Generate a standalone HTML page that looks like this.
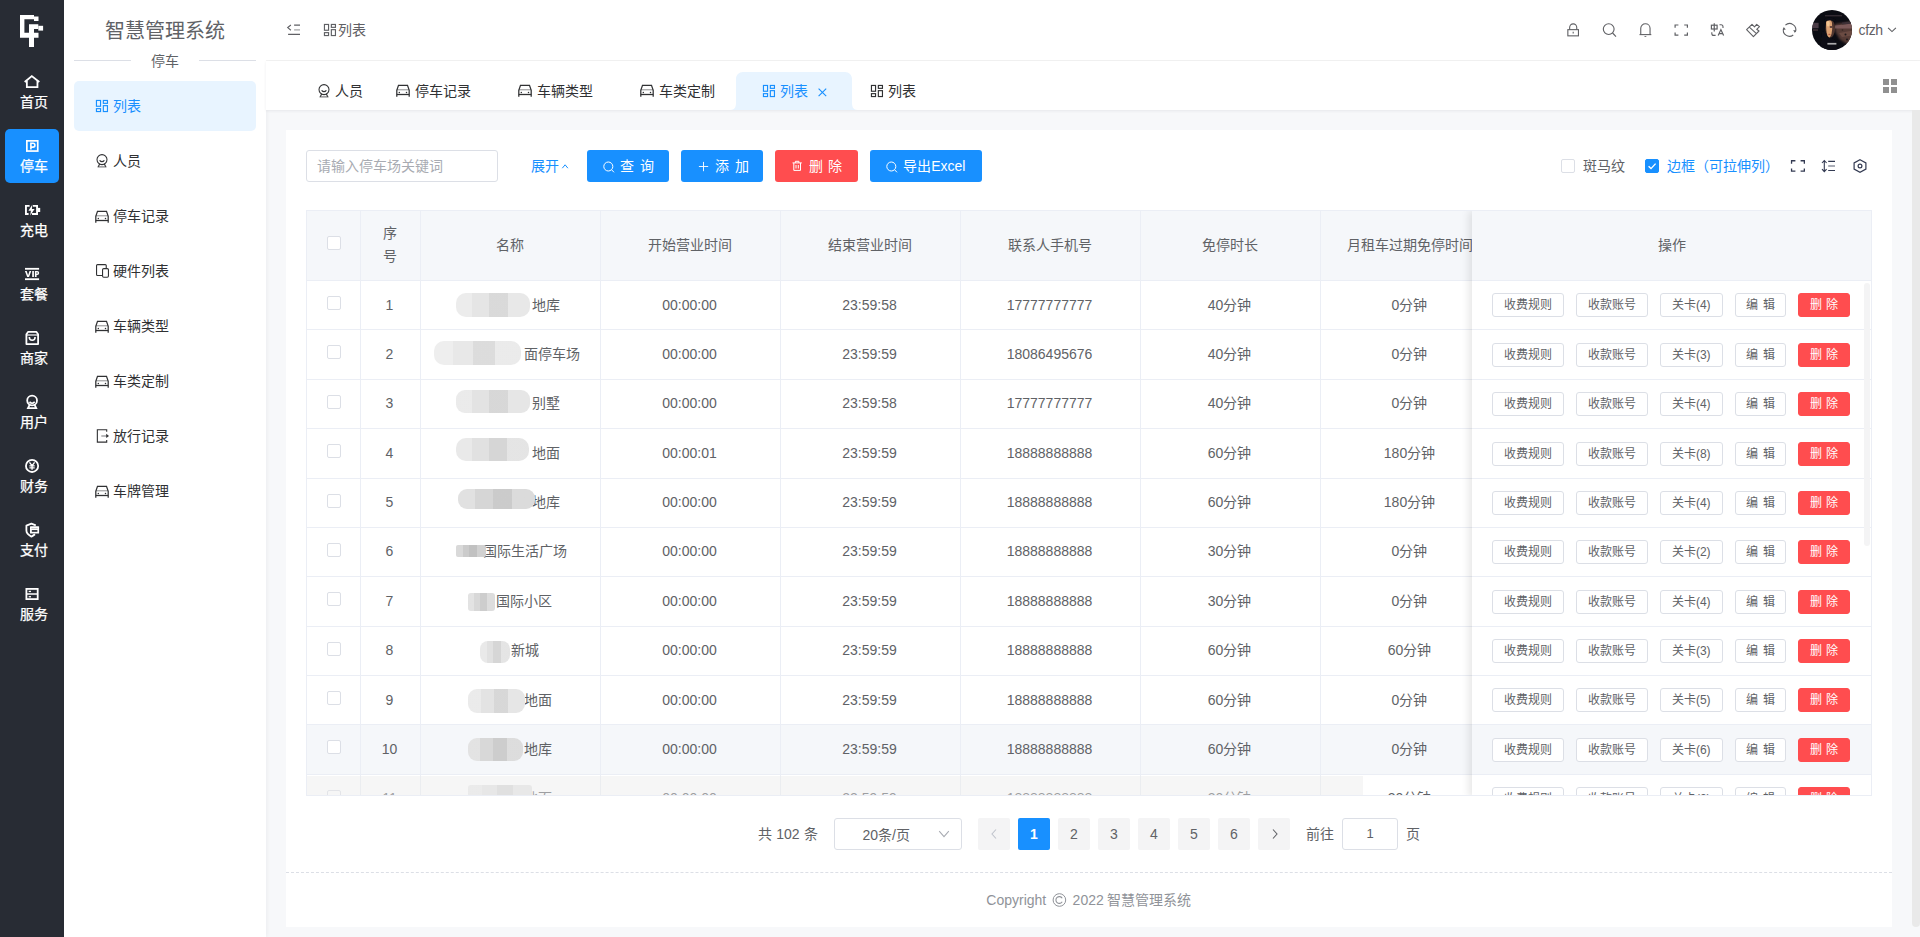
<!DOCTYPE html>
<html lang="zh-CN">
<head>
<meta charset="utf-8">
<title>智慧管理系统</title>
<style>
*{box-sizing:border-box;margin:0;padding:0}
html,body{width:1920px;height:937px;overflow:hidden;background:#f7f8fa;font-family:"Liberation Sans",sans-serif;font-size:14px;color:#606266}
.abs{position:absolute}
svg{display:block;overflow:visible}
.t{position:absolute;line-height:18px;white-space:nowrap}
#rail{position:absolute;left:0;top:0;width:64px;height:937px;background:#282c34}
#side{position:absolute;left:64px;top:0;width:202px;height:937px;background:#fff;box-shadow:1px 0 4px rgba(0,21,41,.05)}
#hdr{position:absolute;left:266px;top:0;width:1654px;height:61px;background:#fff;border-bottom:1px solid #f3f3f3}
#tabs{position:absolute;left:266px;top:61px;width:1654px;height:49px;background:#fff;box-shadow:0 1px 3px rgba(0,21,41,.07)}
#card{position:absolute;left:286px;top:130px;width:1606px;height:797px;background:#fff}
.btn{position:absolute;top:150px;height:32px;border-radius:3px;background:#1890ff}
.btn.red{background:#ff4d4f}
.cb{position:absolute;width:14px;height:14px;border:1px solid #dcdfe6;border-radius:2px;background:#fff}
#tbl{position:absolute;left:306px;top:210px;width:1566px;height:586px;overflow:hidden;border:1px solid #ebeef5;background:#fff}
.hd{position:absolute;left:0;top:0;width:1566px;height:70px;background:#f5f7fa;border-bottom:1px solid #ebeef5}
.vl{position:absolute;top:0;width:1px;height:586px;background:#ebeef5}
.row{position:absolute;left:0;width:1566px;border-bottom:1px solid #ebeef5}
.c{position:absolute;text-align:center;font-size:14px;line-height:18px;color:#606266;white-space:nowrap}
#fix{position:absolute;left:1165px;top:0;width:401px;height:586px;background:#fff;box-shadow:-3px 0 8px rgba(0,0,0,.10);overflow:hidden}
.sb{position:absolute;height:24px;border:1px solid #dcdfe6;border-radius:3px;background:#fff;color:#606266;font-size:12px;line-height:22px;text-align:center;white-space:nowrap;word-spacing:.8px}
.sb.red{background:#ff4d4f;border-color:#ff4d4f;color:#fff}
.blur{position:absolute;background-image:linear-gradient(90deg,rgba(255,255,255,.28) 0 22%,rgba(255,255,255,0) 22% 45%,rgba(0,0,0,.05) 45% 70%,rgba(255,255,255,.12) 70%)}
.pg{position:absolute;top:818px;width:32px;height:32px;border-radius:2px;background:#f4f4f5;color:#606266;font-size:14px;line-height:32px;text-align:center}
.pg.on{background:#1890ff;color:#fff;font-weight:700}
</style>
</head>
<body>
<div id="rail"></div>
<svg class="abs" style="left:0;top:0;width:64px;height:60px" viewBox="0 0 64 60" fill="#fff"><path d="M20 15h14v4.3H24.4v13.4H29v-8.5h9.3V29H34v3.7h4.5v5H34v9.2h-5v-9.2h-9z"/><rect x="34" y="16.5" width="4.5" height="4.5"/><rect x="38.3" y="25.8" width="4.8" height="4.8"/></svg>
<div class="abs" style="left:5px;top:129px;width:54px;height:54px;border-radius:5px;background:#1890ff"></div>
<svg class="abs" style="left:24px;top:74px;width:16px;height:15px;color:#fff" viewBox="0 0 16 15"><path d="M0.7 8 L7.8 2.1 L15.3 8" fill="none" stroke="currentColor" stroke-width="1.9" /><path d="M2.85 7 V13.2 H13.45 V7" fill="none" stroke="currentColor" stroke-width="1.8" /></svg><div class="t" style="left:0;width:67px;text-align:center;top:93px;font-size:14px;color:#fff;-webkit-text-stroke:.25px #fff">首页</div>
<svg class="abs" style="left:25px;top:139px;width:15px;height:14px;color:#fff" viewBox="0 0 15 14"><rect x="1.85" y="1.85" width="10.9" height="10.2" fill="none" stroke="currentColor" stroke-width="1.7"/><path d="M5.9 10.4 V4.3 H8 a1.9 1.9 0 0 1 0 3.8 H5.9" fill="none" stroke="currentColor" stroke-width="1.6" /></svg><div class="t" style="left:0;width:67px;text-align:center;top:157px;font-size:14px;color:#fff;-webkit-text-stroke:.25px #fff">停车</div>
<svg class="abs" style="left:24px;top:204px;width:17px;height:12px;color:#fff" viewBox="0 0 17 12"><path d="M5.6 1.85 H1.95 V10.05 H4.6 M9 1.85 H13.05 V10.05 H8" fill="none" stroke="currentColor" stroke-width="1.9" /><rect x="14" y="3.9" width="2.2" height="4.1" fill="currentColor"/><path d="M8.4 0.4 L4.4 6.7 H6.9 L6.2 11.6 L10.6 4.9 H7.9 Z" fill="currentColor" /></svg><div class="t" style="left:0;width:67px;text-align:center;top:221px;font-size:14px;color:#fff;-webkit-text-stroke:.25px #fff">充电</div>
<svg class="abs" style="left:24px;top:267px;width:16px;height:14px;color:#fff" viewBox="0 0 16 14"><rect x="1" y="0.9" width="14.1" height="1.8" fill="currentColor"/><rect x="1" y="11.3" width="14.1" height="1.8" fill="currentColor"/><path d="M0.9 4 H2.7 L4.1 8.3 L5.5 4 H7.3 L5 10 H3.2 Z M8.2 4 H9.9 V10 H8.2 Z M10.9 4 H13.2 a2 2 0 0 1 0 4 H12.6 V10 H10.9 Z M12.5 5.3 V6.7 H13 a.7 .7 0 0 0 0 -1.4 Z" fill="currentColor" fill-rule="evenodd"/></svg><div class="t" style="left:0;width:67px;text-align:center;top:285px;font-size:14px;color:#fff;-webkit-text-stroke:.25px #fff">套餐</div>
<svg class="abs" style="left:24px;top:330px;width:16px;height:16px;color:#fff" viewBox="0 0 16 16"><path d="M4.2 1.8 H12.3 L14.1 4.2 V14.1 H2.4 V4.2 Z" fill="none" stroke="currentColor" stroke-width="1.8" stroke-linejoin="round"/><path d="M2.4 5 H14.1" fill="none" stroke="currentColor" stroke-width="1.2" /><path d="M5.3 6.9 a2.9 3.3 0 0 0 5.8 0" fill="none" stroke="currentColor" stroke-width="1.6" /></svg><div class="t" style="left:0;width:67px;text-align:center;top:349px;font-size:14px;color:#fff;-webkit-text-stroke:.25px #fff">商家</div>
<svg class="abs" style="left:24px;top:394px;width:16px;height:16px;color:#fff" viewBox="0 0 16 16"><circle cx="8.1" cy="6.5" r="4.9" fill="none" stroke="currentColor" stroke-width="1.8"/><path d="M5.5 7.9 Q8.1 10.5 10.7 7.9" fill="none" stroke="currentColor" stroke-width="1.5" /><path d="M5.7 10.6 L4 14.1 H12.2 L10.5 10.6" fill="none" stroke="currentColor" stroke-width="1.8" /></svg><div class="t" style="left:0;width:67px;text-align:center;top:413px;font-size:14px;color:#fff;-webkit-text-stroke:.25px #fff">用户</div>
<svg class="abs" style="left:24px;top:458px;width:16px;height:16px;color:#fff" viewBox="0 0 16 16"><circle cx="8.05" cy="7.9" r="6.1" fill="none" stroke="currentColor" stroke-width="1.8"/><path d="M5.5 4.4 L8.05 7.6 L10.6 4.4 M8.05 7.6 V11.8 M5.4 7.9 H10.7 M5.4 9.9 H10.7" fill="none" stroke="currentColor" stroke-width="1.4" /></svg><div class="t" style="left:0;width:67px;text-align:center;top:477px;font-size:14px;color:#fff;-webkit-text-stroke:.25px #fff">财务</div>
<svg class="abs" style="left:24px;top:522px;width:16px;height:16px;color:#fff" viewBox="0 0 16 16"><path d="M11.8 3.4 L7.4 1.7 L2.4 3.7 V8.6 Q2.4 12 7.4 14.6 Q9.6 13.4 11 12.3" fill="none" stroke="currentColor" stroke-width="1.8" stroke-linejoin="round"/><rect x="6" y="4.2" width="9.1" height="7.4" rx=".6" fill="currentColor"/><rect x="7.8" y="8.1" width="5.6" height="1.7" fill="#282c34"/><rect x="7.4" y="6.2" width="6.2" height=".5" fill="#9a9a9a"/></svg><div class="t" style="left:0;width:67px;text-align:center;top:541px;font-size:14px;color:#fff;-webkit-text-stroke:.25px #fff">支付</div>
<svg class="abs" style="left:24px;top:587px;width:16px;height:14px;color:#fff" viewBox="0 0 16 14"><rect x="2.4" y="1.9" width="11.3" height="10.2" fill="none" stroke="currentColor" stroke-width="1.8"/><path d="M2.4 7 H13.7" fill="none" stroke="currentColor" stroke-width="1.5" /><rect x="4.7" y="3.8" width="2.3" height="1.3" fill="currentColor"/><rect x="4.7" y="9.1" width="2.3" height="1.3" fill="currentColor"/></svg><div class="t" style="left:0;width:67px;text-align:center;top:605px;font-size:14px;color:#fff;-webkit-text-stroke:.25px #fff">服务</div>
<div id="side"></div>
<div class="t" style="left:64px;width:202px;text-align:center;top:17px;font-size:20px;line-height:28px;color:#606266">智慧管理系统</div>
<div class="abs" style="left:74px;top:60px;width:57px;height:1px;background:#dcdfe6"></div><div class="abs" style="left:199px;top:60px;width:57px;height:1px;background:#dcdfe6"></div>
<div class="t" style="left:64px;width:202px;text-align:center;top:52px;font-size:14px;color:#606266">停车</div>
<div class="abs" style="left:74px;top:81px;width:182px;height:50px;border-radius:5px;background:#e8f4ff"></div>
<svg class="abs" style="left:95px;top:99px;width:14px;height:14px;color:#1890ff" viewBox="0 0 14 14"><g fill="none" stroke="currentColor" stroke-width="1.15"><rect x="1.45" y="1.45" width="4.1" height="5.8"/><rect x="8.35" y="1.45" width="4.1" height="2.9"/><rect x="1.45" y="9.65" width="4.1" height="2.9"/><rect x="8.35" y="6.65" width="4.1" height="5.9"/></g></svg><div class="t" style="left:113px;top:97px;font-size:14px;color:#1890ff;">列表</div>
<svg class="abs" style="left:95px;top:153px;width:14px;height:15px;color:#303133" viewBox="0 0 14 15"><path d="M12 6.6 A5 5 0 1 0 2 6.6 A5 5 0 1 0 12 6.6 Z" fill="none" stroke="currentColor" stroke-width="1.05" /><path d="M4.6 7.3 Q7 10 9.4 7.3" fill="none" stroke="currentColor" stroke-width="1.1" /><path d="M4.7 10.7 L3.3 13.8 M9.3 10.7 L10.7 13.8" fill="none" stroke="currentColor" stroke-width="1.1" /><path d="M2.5 13.9 H11.5" fill="none" stroke="currentColor" stroke-width="1.1" stroke-opacity=".7"/></svg><div class="t" style="left:113px;top:152px;font-size:14px;color:#303133;">人员</div>
<svg class="abs" style="left:95px;top:210px;width:14px;height:13px;color:#303133" viewBox="0 0 14 13"><path d="M0.8 12.7 V6.3 L2.5 1.4 H11.5 L13.2 6.3 V12.7" fill="none" stroke="currentColor" stroke-width="1.25" /><path d="M0.8 5.8 H13.2" fill="none" stroke="currentColor" stroke-width="1.0" stroke-opacity=".55"/><path d="M0.8 10.5 H13.2" fill="none" stroke="currentColor" stroke-width="1.3" /><circle cx="3.3" cy="8.45" r=".75" fill="currentColor"/><circle cx="10.5" cy="8.45" r=".75" fill="currentColor"/></svg><div class="t" style="left:113px;top:207px;font-size:14px;color:#303133;">停车记录</div>
<svg class="abs" style="left:95px;top:263px;width:15px;height:16px;color:#303133" viewBox="0 0 15 16"><path d="M7.5 12.5 H2.5 Q1.55 12.5 1.55 11.5 V2.6 Q1.55 1.65 2.5 1.65 H10.3 Q11.25 1.65 11.25 2.6 V5.6" fill="none" stroke="currentColor" stroke-width="1.1" /><rect x="7.55" y="5.6" width="5.9" height="8.6" rx="1.2" fill="none" stroke="currentColor" stroke-width="1.1"/></svg><div class="t" style="left:113px;top:262px;font-size:14px;color:#303133;">硬件列表</div>
<svg class="abs" style="left:95px;top:320px;width:14px;height:13px;color:#303133" viewBox="0 0 14 13"><path d="M0.8 12.7 V6.3 L2.5 1.4 H11.5 L13.2 6.3 V12.7" fill="none" stroke="currentColor" stroke-width="1.25" /><path d="M0.8 5.8 H13.2" fill="none" stroke="currentColor" stroke-width="1.0" stroke-opacity=".55"/><path d="M0.8 10.5 H13.2" fill="none" stroke="currentColor" stroke-width="1.3" /><circle cx="3.3" cy="8.45" r=".75" fill="currentColor"/><circle cx="10.5" cy="8.45" r=".75" fill="currentColor"/></svg><div class="t" style="left:113px;top:317px;font-size:14px;color:#303133;">车辆类型</div>
<svg class="abs" style="left:95px;top:375px;width:14px;height:13px;color:#303133" viewBox="0 0 14 13"><path d="M0.8 12.7 V6.3 L2.5 1.4 H11.5 L13.2 6.3 V12.7" fill="none" stroke="currentColor" stroke-width="1.25" /><path d="M0.8 5.8 H13.2" fill="none" stroke="currentColor" stroke-width="1.0" stroke-opacity=".55"/><path d="M0.8 10.5 H13.2" fill="none" stroke="currentColor" stroke-width="1.3" /><circle cx="3.3" cy="8.45" r=".75" fill="currentColor"/><circle cx="10.5" cy="8.45" r=".75" fill="currentColor"/></svg><div class="t" style="left:113px;top:372px;font-size:14px;color:#303133;">车类定制</div>
<svg class="abs" style="left:95px;top:428px;width:15px;height:16px;color:#303133" viewBox="0 0 15 16"><path d="M11.7 3.7 V1.75 H2.35 V14.15 H11.7 V12.1" fill="none" stroke="currentColor" stroke-width="1.1" /><path d="M6.3 8 H11.5" fill="none" stroke="currentColor" stroke-width="1.1" stroke-opacity=".6"/><path d="M11.2 5.85 L14 8 L11.2 10.1 Z" fill="currentColor" /></svg><div class="t" style="left:113px;top:427px;font-size:14px;color:#303133;">放行记录</div>
<svg class="abs" style="left:95px;top:485px;width:14px;height:13px;color:#303133" viewBox="0 0 14 13"><path d="M0.8 12.7 V6.3 L2.5 1.4 H11.5 L13.2 6.3 V12.7" fill="none" stroke="currentColor" stroke-width="1.25" /><path d="M0.8 5.8 H13.2" fill="none" stroke="currentColor" stroke-width="1.0" stroke-opacity=".55"/><path d="M0.8 10.5 H13.2" fill="none" stroke="currentColor" stroke-width="1.3" /><circle cx="3.3" cy="8.45" r=".75" fill="currentColor"/><circle cx="10.5" cy="8.45" r=".75" fill="currentColor"/></svg><div class="t" style="left:113px;top:482px;font-size:14px;color:#303133;">车牌管理</div>
<div id="hdr"></div>
<svg class="abs" style="left:286px;top:23px;width:15px;height:13px;color:#5f6064" viewBox="0 0 15 13"><path d="M4.9 2 L1.7 4.6 L4.9 7.2" fill="none" stroke="currentColor" stroke-width="1.1" /><path d="M8.1 2.1 H14 M2.1 11.4 H14" fill="none" stroke="currentColor" stroke-width="1.1" /><path d="M8.1 6.9 H14" fill="none" stroke="currentColor" stroke-width="1.2" stroke-opacity=".6"/></svg><svg class="abs" style="left:323px;top:23px;width:14px;height:14px;color:#5f6064" viewBox="0 0 14 14"><g fill="none" stroke="currentColor" stroke-width="1.15"><rect x="1.45" y="1.45" width="4.1" height="5.8"/><rect x="8.35" y="1.45" width="4.1" height="2.9"/><rect x="1.45" y="9.65" width="4.1" height="2.9"/><rect x="8.35" y="6.65" width="4.1" height="5.9"/></g></svg><div class="t" style="left:338px;top:21px;font-size:14px;color:#5f6064;">列表</div>
<svg class="abs" style="left:1566px;top:22px;width:14px;height:15px;color:#5f6064" viewBox="0 0 14 15"><rect x="1.85" y="7.65" width="10.6" height="6.2" fill="none" stroke="currentColor" stroke-width="1.1"/><path d="M3.65 7.6 V5.6 A3.55 3.75 0 0 1 10.75 5.6 V7.6" fill="none" stroke="currentColor" stroke-width="1.1" /><path d="M7.2 9.8 V11.6" fill="none" stroke="currentColor" stroke-width="1.1" /></svg><svg class="abs" style="left:1602px;top:22px;width:15px;height:15px;color:#5f6064" viewBox="0 0 15 15"><circle cx="6.7" cy="7.1" r="5.4" fill="none" stroke="currentColor" stroke-width="1.1"/><path d="M10.6 11 L14 14.6" fill="none" stroke="currentColor" stroke-width="1.1" /></svg><svg class="abs" style="left:1638px;top:22px;width:15px;height:16px;color:#5f6064" viewBox="0 0 15 16"><path d="M2.75 12.6 V6.3 A4.65 4.5 0 0 1 12.05 6.3 V12.6" fill="none" stroke="currentColor" stroke-width="1.1" /><path d="M1.5 12.6 H13.3" fill="none" stroke="currentColor" stroke-width="1.1" /><path d="M5.9 13.9 H8.9 L7.4 15.1 Z" fill="currentColor" /></svg><svg class="abs" style="left:1674px;top:24px;width:15px;height:13px;color:#5f6064" viewBox="0 0 15 13"><path d="M1.1 3.7 V1 H4.4 M10.2 1 H13.4 V3.7 M13.4 8.4 V11.1 H10.2 M4.4 11.1 H1.1 V8.4" fill="none" stroke="currentColor" stroke-width="1.2" /></svg><svg class="abs" style="left:1710px;top:22px;width:15px;height:15px;color:#5f6064" viewBox="0 0 15 15"><rect x="1.4" y="3.2" width="5.7" height="3.8" fill="none" stroke="currentColor" stroke-width="1.2"/><path d="M4.25 1.3 V9.4" fill="none" stroke="currentColor" stroke-width="1.2" /><path d="M8.2 13.6 L10.9 7.6 L13.6 13.6 M9.2 11.7 H12.6" fill="none" stroke="currentColor" stroke-width="1.2" /><path d="M9.5 2.8 H11 Q13 2.8 13 4.8 V6" fill="none" stroke="currentColor" stroke-width="1.1" /><path d="M1.8 10.2 V11.4 Q1.8 13.4 3.8 13.4 H5.6" fill="none" stroke="currentColor" stroke-width="1.1" /></svg><svg class="abs" style="left:1746px;top:22px;width:15px;height:16px;color:#5f6064" viewBox="0 0 15 16"><path d="M0.6 7.6 L6 2.3 L8.5 4.8 L10.7 2.3 L13.5 4.6 L10.7 7.3 L13 9 L7.4 14.7 Z" fill="none" stroke="currentColor" stroke-width="1.1" stroke-linejoin="round"/><path d="M3.3 5.1 L10.2 11.4" fill="none" stroke="currentColor" stroke-width="1.1" /></svg><svg class="abs" style="left:1782px;top:22px;width:16px;height:16px;color:#5f6064" viewBox="0 0 16 16"><path d="M3.4 3.2 A6.2 6.2 0 0 1 13.4 9.9" fill="none" stroke="currentColor" stroke-width="1.1" /><path d="M11.25 13 A6.2 6.2 0 0 1 1.56 6.3" fill="none" stroke="currentColor" stroke-width="1.1" /><path d="M11.2 8 L13.9 8.5 L12.9 11 Z" fill="currentColor" /><path d="M0.9 7.9 L3.8 7.5 L1.7 4.9 Z" fill="currentColor" /></svg>
<svg class="abs" style="left:1812px;top:10px;width:40px;height:40px" viewBox="0 0 40 40"><defs><clipPath id="av"><circle cx="20" cy="20" r="20"/></clipPath><filter id="b1" x="-20%" y="-20%" width="140%" height="140%"><feGaussianBlur stdDeviation=".7"/></filter><filter id="b2" x="-20%" y="-20%" width="140%" height="140%"><feGaussianBlur stdDeviation="1.3"/></filter></defs><g clip-path="url(#av)"><rect width="40" height="40" fill="#0b0c13"/><path d="M23 14 L41 11.5 L41 35 L34 33.5 L28 29.5 L23.5 22 Z" fill="#553b34" filter="url(#b2)"/><path d="M23 15.4 L41 13.4 L41 18.4 L23 18.6 Z" fill="#8d676b" opacity=".7" filter="url(#b1)"/><path d="M27 23 L41 20.5 L41 25.5 L30 27 Z" fill="#74524a" opacity=".7" filter="url(#b1)"/><path d="M30 12.5 L41 11 L41 13.5 L30 14.5 Z" fill="#3c3038" opacity=".9" filter="url(#b1)"/><circle cx="33.5" cy="24.5" r="1" fill="#0b0c13" opacity=".8"/><circle cx="35" cy="29.5" r="1.1" fill="#0b0c13" opacity=".7"/><circle cx="30.5" cy="20" r=".8" fill="#2a1c1c" opacity=".7"/><rect x="-1" y="12.8" width="7.6" height="5.4" fill="#5c4a54" opacity=".8" filter="url(#b1)"/><rect x="1" y="19" width="5" height="2" fill="#3a2e30" opacity=".8" filter="url(#b1)"/><rect x="13" y="5" width="17" height="1.4" fill="#3c323a" opacity=".8" filter="url(#b1)"/><ellipse cx="18.2" cy="18.6" rx="4.8" ry="9.2" fill="#4f362e" filter="url(#b1)"/><path d="M14 12 Q14.5 9.6 17 9.8 Q19.6 10 20 13 L20.2 19 Q20 24.5 18 27.2 Q16.4 28 15.4 25.6 Q14 21 14 12 Z" fill="#dca273" filter="url(#b1)"/><ellipse cx="16.2" cy="13.6" rx="1.5" ry="2.8" fill="#f1c592" filter="url(#b1)"/><ellipse cx="19" cy="17" rx="1.4" ry=".9" fill="#5a3d3a" filter="url(#b1)"/><ellipse cx="17.4" cy="24.3" rx="1.2" ry=".6" fill="#a8402f" opacity=".8"/><path d="M12 9.8 Q17 5.5 23.5 9.4 L22.6 11.4 Q17.5 9 13 11.8 Z" fill="#0b0c13" filter="url(#b1)"/><path d="M10 22 L13.6 21 L15.2 28 L19 27.8 L23 30 L26 40 L8 40 Z" fill="#0b0c13" filter="url(#b1)"/><rect x="15.4" y="32.9" width="9" height="1.7" fill="#c8c8c8" opacity=".85"/></g></svg>
<div class="t" style="left:1858.5px;top:21px;font-size:14px;color:#5f6064;letter-spacing:-.35px">cfzh</div><svg class="abs" style="left:1887px;top:27px;width:10px;height:6px;color:#5f6064" viewBox="0 0 10 6"><path d="M1.1 0.9 L5 4.6 L8.9 0.9" fill="none" stroke="currentColor" stroke-width="1.1" /></svg>
<div id="tabs"></div>
<svg class="abs" style="left:730px;top:72px;width:128px;height:38px" viewBox="0 0 128 38"><path d="M0 38 C6 38 6 33 6 30 V7 C6 3 9 0 13 0 H115 C119 0 122 3 122 7 V30 C122 33 122 38 128 38 Z" fill="#e8f4ff"/></svg>
<svg class="abs" style="left:317px;top:83px;width:14px;height:15px;color:#303133" viewBox="0 0 14 15"><path d="M12 6.6 A5 5 0 1 0 2 6.6 A5 5 0 1 0 12 6.6 Z" fill="none" stroke="currentColor" stroke-width="1.05" /><path d="M4.6 7.3 Q7 10 9.4 7.3" fill="none" stroke="currentColor" stroke-width="1.1" /><path d="M4.7 10.7 L3.3 13.8 M9.3 10.7 L10.7 13.8" fill="none" stroke="currentColor" stroke-width="1.1" /><path d="M2.5 13.9 H11.5" fill="none" stroke="currentColor" stroke-width="1.1" stroke-opacity=".7"/></svg><div class="t" style="left:335px;top:82px;font-size:14px;color:#303133;">人员</div>
<svg class="abs" style="left:396px;top:84px;width:14px;height:13px;color:#303133" viewBox="0 0 14 13"><path d="M0.8 12.7 V6.3 L2.5 1.4 H11.5 L13.2 6.3 V12.7" fill="none" stroke="currentColor" stroke-width="1.25" /><path d="M0.8 5.8 H13.2" fill="none" stroke="currentColor" stroke-width="1.0" stroke-opacity=".55"/><path d="M0.8 10.5 H13.2" fill="none" stroke="currentColor" stroke-width="1.3" /><circle cx="3.3" cy="8.45" r=".75" fill="currentColor"/><circle cx="10.5" cy="8.45" r=".75" fill="currentColor"/></svg><div class="t" style="left:414.5px;top:82px;font-size:14px;color:#303133;">停车记录</div>
<svg class="abs" style="left:518px;top:84px;width:14px;height:13px;color:#303133" viewBox="0 0 14 13"><path d="M0.8 12.7 V6.3 L2.5 1.4 H11.5 L13.2 6.3 V12.7" fill="none" stroke="currentColor" stroke-width="1.25" /><path d="M0.8 5.8 H13.2" fill="none" stroke="currentColor" stroke-width="1.0" stroke-opacity=".55"/><path d="M0.8 10.5 H13.2" fill="none" stroke="currentColor" stroke-width="1.3" /><circle cx="3.3" cy="8.45" r=".75" fill="currentColor"/><circle cx="10.5" cy="8.45" r=".75" fill="currentColor"/></svg><div class="t" style="left:536.5px;top:82px;font-size:14px;color:#303133;">车辆类型</div>
<svg class="abs" style="left:640px;top:84px;width:14px;height:13px;color:#303133" viewBox="0 0 14 13"><path d="M0.8 12.7 V6.3 L2.5 1.4 H11.5 L13.2 6.3 V12.7" fill="none" stroke="currentColor" stroke-width="1.25" /><path d="M0.8 5.8 H13.2" fill="none" stroke="currentColor" stroke-width="1.0" stroke-opacity=".55"/><path d="M0.8 10.5 H13.2" fill="none" stroke="currentColor" stroke-width="1.3" /><circle cx="3.3" cy="8.45" r=".75" fill="currentColor"/><circle cx="10.5" cy="8.45" r=".75" fill="currentColor"/></svg><div class="t" style="left:658.5px;top:82px;font-size:14px;color:#303133;">车类定制</div>
<svg class="abs" style="left:762px;top:84px;width:14px;height:14px;color:#1890ff" viewBox="0 0 14 14"><g fill="none" stroke="currentColor" stroke-width="1.15"><rect x="1.45" y="1.45" width="4.1" height="5.8"/><rect x="8.35" y="1.45" width="4.1" height="2.9"/><rect x="1.45" y="9.65" width="4.1" height="2.9"/><rect x="8.35" y="6.65" width="4.1" height="5.9"/></g></svg><div class="t" style="left:780.3px;top:82px;font-size:14px;color:#1890ff;">列表</div>
<svg class="abs" style="left:870px;top:84px;width:14px;height:14px;color:#303133" viewBox="0 0 14 14"><g fill="none" stroke="currentColor" stroke-width="1.15"><rect x="1.45" y="1.45" width="4.1" height="5.8"/><rect x="8.35" y="1.45" width="4.1" height="2.9"/><rect x="1.45" y="9.65" width="4.1" height="2.9"/><rect x="8.35" y="6.65" width="4.1" height="5.9"/></g></svg><div class="t" style="left:888px;top:82px;font-size:14px;color:#303133;">列表</div>
<svg class="abs" style="left:817.6px;top:87.6px;width:9px;height:9px;color:#1890ff" viewBox="0 0 9 9"><path d="M0.6 0.6 L8.2 8.2 M8.2 0.6 L0.6 8.2" fill="none" stroke="currentColor" stroke-width="1.1" /></svg>
<svg class="abs" style="left:1883px;top:79px;width:14px;height:14px" viewBox="0 0 14 14" fill="#909090"><rect x="0" y="0" width="6" height="6"/><rect x="8" y="0" width="6" height="6"/><rect x="0" y="8" width="6" height="6"/><rect x="8" y="8" width="6" height="6"/></svg>
<div class="abs" style="left:1912px;top:110px;width:8px;height:817px;background:#e9e9e9;border-radius:0 0 4px 4px"></div>
<div id="card"></div>
<div class="abs" style="left:306px;top:150px;width:192px;height:32px;border:1px solid #dcdfe6;border-radius:3px;background:#fff"></div>
<div class="t" style="left:317px;top:157px;font-size:14px;color:#a8abb2;">请输入停车场关键词</div>
<div class="t" style="left:531px;top:157px;font-size:14px;color:#1890ff;">展开</div><svg class="abs" style="left:561px;top:163px;width:8px;height:6px;color:#1890ff" viewBox="0 0 8 6"><path d="M1.3 5.2 L4.1 1.8 L6.9 5.2" fill="none" stroke="currentColor" stroke-width="1.0" /></svg>
<div class="btn" style="left:587px;width:82px"></div><svg class="abs" style="left:603px;top:160.5px;width:12px;height:12px;color:#fff" viewBox="0 0 12 12"><circle cx="5.3" cy="5.5" r="4.5" fill="none" stroke="currentColor" stroke-width="1"/><path d="M8.6 8.8 L11 11.3" fill="none" stroke="currentColor" stroke-width="1" /></svg><div class="t" style="left:620.2px;top:157px;font-size:14px;color:#fff;word-spacing:1.6px">查 询</div>
<div class="btn" style="left:681px;width:82px"></div><svg class="abs" style="left:697.5px;top:160.5px;width:11px;height:11px;color:#fff" viewBox="0 0 11 11"><path d="M5.5 0.9 V10.2 M0.9 5.5 H10.2" fill="none" stroke="currentColor" stroke-width="1" stroke-opacity=".9"/></svg><div class="t" style="left:715.2px;top:157px;font-size:14px;color:#fff;word-spacing:1.6px">添 加</div>
<div class="btn red" style="left:775px;width:83px"></div><svg class="abs" style="left:792px;top:160px;width:11px;height:12px;color:#fff" viewBox="0 0 11 12"><path d="M0.5 2.9 H9.8 M3.4 2.9 V1.3 H6.9 V2.9 M1.8 2.9 V10.4 H8.5 V2.9 M4 5 V8.5 M6.3 5 V8.5" fill="none" stroke="currentColor" stroke-width="1" /></svg><div class="t" style="left:808.6px;top:157px;font-size:14px;color:#fff;word-spacing:1.6px">删 除</div>
<div class="btn" style="left:870px;width:112px"></div><svg class="abs" style="left:886px;top:160.5px;width:12px;height:12px;color:#fff" viewBox="0 0 12 12"><circle cx="5.3" cy="5.5" r="4.5" fill="none" stroke="currentColor" stroke-width="1"/><path d="M8.6 8.8 L11 11.3" fill="none" stroke="currentColor" stroke-width="1" /></svg><div class="t" style="left:903.2px;top:157px;font-size:14px;color:#fff;word-spacing:1.6px">导出Excel</div>
<div class="cb" style="left:1561px;top:159px"></div><div class="t" style="left:1583px;top:157px;font-size:14px;color:#606266;">斑马纹</div>
<div class="cb" style="left:1645px;top:159px;background:#1890ff;border-color:#1890ff"><svg viewBox="0 0 12 12" style="width:12px;height:12px"><path d="M2.6 6.2 L5 8.6 L9.6 3.6" fill="none" stroke="#fff" stroke-width="1.4"/></svg></div><div class="t" style="left:1667px;top:157px;font-size:14px;color:#1890ff;">边框（可拉伸列）</div>
<svg class="abs" style="left:1790px;top:159px;width:16px;height:14px;color:#333a52" viewBox="0 0 16 14"><path d="M1.55 4.7 V1.75 H5.4 M10.6 1.75 H14.35 V4.7 M14.35 9.4 V12.2 H10.6 M5.4 12.2 H1.55 V9.4" fill="none" stroke="currentColor" stroke-width="1.3" /></svg><svg class="abs" style="left:1820px;top:159px;width:16px;height:14px;color:#333a52" viewBox="0 0 16 14"><path d="M4.3 1.6 V12.6 M2 4 L4.3 1.5 L6.6 4 M2 10.2 L4.3 12.7 L6.6 10.2" fill="none" stroke="currentColor" stroke-width="1.1" /><path d="M8.2 2.4 H15 M8.2 11.5 H15" fill="none" stroke="currentColor" stroke-width="1.2" /><path d="M8.2 7 H15" fill="none" stroke="currentColor" stroke-width="1.4" stroke-opacity=".6"/></svg><svg class="abs" style="left:1852px;top:158px;width:16px;height:16px;color:#333a52" viewBox="0 0 16 16"><path d="M8 1.7 L13.9 4.9 V11.1 L8 14.3 L2.1 11.1 V4.9 Z" fill="none" stroke="currentColor" stroke-width="1.2" /><circle cx="8" cy="8" r="1.9" fill="none" stroke="currentColor" stroke-width="1.2"/></svg>
<div id="tbl">
<div class="hd"></div>
<div class="row" style="top:70.050px;height:49.375px;"><div class="cb" style="left:20px;top:15.05px"></div><div class="c" style="left:53px;width:59px;top:14.5px">1</div><div class="c" style="left:102.5px;width:150px;top:14.5px;text-align:right">地库</div><div class="c" style="left:293px;width:179px;top:14.5px">00:00:00</div><div class="c" style="left:473px;width:179px;top:14.5px">23:59:58</div><div class="c" style="left:653px;width:179px;top:14.5px">17777777777</div><div class="c" style="left:833px;width:179px;top:14.5px">40分钟</div><div class="c" style="left:1013px;width:179px;top:14.5px">0分钟</div></div>
<div class="row" style="top:119.425px;height:49.375px;"><div class="cb" style="left:20px;top:15.05px"></div><div class="c" style="left:53px;width:59px;top:14.5px">2</div><div class="c" style="left:122.5px;width:150px;top:14.5px;text-align:right">面停车场</div><div class="c" style="left:293px;width:179px;top:14.5px">00:00:00</div><div class="c" style="left:473px;width:179px;top:14.5px">23:59:59</div><div class="c" style="left:653px;width:179px;top:14.5px">18086495676</div><div class="c" style="left:833px;width:179px;top:14.5px">40分钟</div><div class="c" style="left:1013px;width:179px;top:14.5px">0分钟</div></div>
<div class="row" style="top:168.800px;height:49.375px;"><div class="cb" style="left:20px;top:15.05px"></div><div class="c" style="left:53px;width:59px;top:14.5px">3</div><div class="c" style="left:102.5px;width:150px;top:14.5px;text-align:right">别墅</div><div class="c" style="left:293px;width:179px;top:14.5px">00:00:00</div><div class="c" style="left:473px;width:179px;top:14.5px">23:59:58</div><div class="c" style="left:653px;width:179px;top:14.5px">17777777777</div><div class="c" style="left:833px;width:179px;top:14.5px">40分钟</div><div class="c" style="left:1013px;width:179px;top:14.5px">0分钟</div></div>
<div class="row" style="top:218.175px;height:49.375px;"><div class="cb" style="left:20px;top:15.05px"></div><div class="c" style="left:53px;width:59px;top:14.5px">4</div><div class="c" style="left:102.5px;width:150px;top:14.5px;text-align:right">地面</div><div class="c" style="left:293px;width:179px;top:14.5px">00:00:01</div><div class="c" style="left:473px;width:179px;top:14.5px">23:59:59</div><div class="c" style="left:653px;width:179px;top:14.5px">18888888888</div><div class="c" style="left:833px;width:179px;top:14.5px">60分钟</div><div class="c" style="left:1013px;width:179px;top:14.5px">180分钟</div></div>
<div class="row" style="top:267.550px;height:49.375px;"><div class="cb" style="left:20px;top:15.05px"></div><div class="c" style="left:53px;width:59px;top:14.5px">5</div><div class="c" style="left:102.5px;width:150px;top:14.5px;text-align:right">地库</div><div class="c" style="left:293px;width:179px;top:14.5px">00:00:00</div><div class="c" style="left:473px;width:179px;top:14.5px">23:59:59</div><div class="c" style="left:653px;width:179px;top:14.5px">18888888888</div><div class="c" style="left:833px;width:179px;top:14.5px">60分钟</div><div class="c" style="left:1013px;width:179px;top:14.5px">180分钟</div></div>
<div class="row" style="top:316.925px;height:49.375px;"><div class="cb" style="left:20px;top:15.05px"></div><div class="c" style="left:53px;width:59px;top:14.5px">6</div><div class="c" style="left:109.5px;width:150px;top:14.5px;text-align:right">国际生活广场</div><div class="c" style="left:293px;width:179px;top:14.5px">00:00:00</div><div class="c" style="left:473px;width:179px;top:14.5px">23:59:59</div><div class="c" style="left:653px;width:179px;top:14.5px">18888888888</div><div class="c" style="left:833px;width:179px;top:14.5px">30分钟</div><div class="c" style="left:1013px;width:179px;top:14.5px">0分钟</div></div>
<div class="row" style="top:366.300px;height:49.375px;"><div class="cb" style="left:20px;top:15.05px"></div><div class="c" style="left:53px;width:59px;top:14.5px">7</div><div class="c" style="left:94.5px;width:150px;top:14.5px;text-align:right">国际小区</div><div class="c" style="left:293px;width:179px;top:14.5px">00:00:00</div><div class="c" style="left:473px;width:179px;top:14.5px">23:59:59</div><div class="c" style="left:653px;width:179px;top:14.5px">18888888888</div><div class="c" style="left:833px;width:179px;top:14.5px">30分钟</div><div class="c" style="left:1013px;width:179px;top:14.5px">0分钟</div></div>
<div class="row" style="top:415.675px;height:49.375px;"><div class="cb" style="left:20px;top:15.05px"></div><div class="c" style="left:53px;width:59px;top:14.5px">8</div><div class="c" style="left:81.5px;width:150px;top:14.5px;text-align:right">新城</div><div class="c" style="left:293px;width:179px;top:14.5px">00:00:00</div><div class="c" style="left:473px;width:179px;top:14.5px">23:59:59</div><div class="c" style="left:653px;width:179px;top:14.5px">18888888888</div><div class="c" style="left:833px;width:179px;top:14.5px">60分钟</div><div class="c" style="left:1013px;width:179px;top:14.5px">60分钟</div></div>
<div class="row" style="top:465.050px;height:49.375px;"><div class="cb" style="left:20px;top:15.05px"></div><div class="c" style="left:53px;width:59px;top:14.5px">9</div><div class="c" style="left:94.5px;width:150px;top:14.5px;text-align:right">地面</div><div class="c" style="left:293px;width:179px;top:14.5px">00:00:00</div><div class="c" style="left:473px;width:179px;top:14.5px">23:59:59</div><div class="c" style="left:653px;width:179px;top:14.5px">18888888888</div><div class="c" style="left:833px;width:179px;top:14.5px">60分钟</div><div class="c" style="left:1013px;width:179px;top:14.5px">0分钟</div></div>
<div class="row" style="top:514.425px;height:49.375px;background:#f5f7fa;"><div class="cb" style="left:20px;top:15.05px"></div><div class="c" style="left:53px;width:59px;top:14.5px">10</div><div class="c" style="left:94.5px;width:150px;top:14.5px;text-align:right">地库</div><div class="c" style="left:293px;width:179px;top:14.5px">00:00:00</div><div class="c" style="left:473px;width:179px;top:14.5px">23:59:59</div><div class="c" style="left:653px;width:179px;top:14.5px">18888888888</div><div class="c" style="left:833px;width:179px;top:14.5px">60分钟</div><div class="c" style="left:1013px;width:179px;top:14.5px">0分钟</div></div>
<div class="row" style="top:563.800px;height:49.375px;"><div class="cb" style="left:20px;top:15.05px"></div><div class="c" style="left:53px;width:59px;top:14.5px">11</div><div class="c" style="left:94.5px;width:150px;top:14.5px;text-align:right">地面</div><div class="c" style="left:293px;width:179px;top:14.5px">00:00:00</div><div class="c" style="left:473px;width:179px;top:14.5px">23:59:59</div><div class="c" style="left:653px;width:179px;top:14.5px">18888888888</div><div class="c" style="left:833px;width:179px;top:14.5px">30分钟</div><div class="c" style="left:1013px;width:179px;top:14.5px">30分钟</div></div>
<div class="blur" style="left:149px;top:82px;width:74px;height:24px;background-color:#e5e5e5;border-radius:10px"></div><div class="blur" style="left:127px;top:130px;width:87px;height:24px;background-color:#e8e8e8;border-radius:10px"></div><div class="blur" style="left:149px;top:179px;width:74px;height:23px;background-color:#e3e3e3;border-radius:9px"></div><div class="blur" style="left:149px;top:227px;width:73px;height:23px;background-color:#e1e1e1;border-radius:10px"></div><div class="blur" style="left:151px;top:278px;width:77px;height:20px;background-color:#d6d6d6;border-radius:9px"></div><div class="blur" style="left:149px;top:334px;width:30px;height:12px;background-color:#cbcbcb;border-radius:2px"></div><div class="blur" style="left:161px;top:382px;width:27px;height:18px;background-color:#d8d8d8;border-radius:3px"></div><div class="blur" style="left:173px;top:430px;width:30px;height:22px;background-color:#e1e1e1;border-radius:8px"></div><div class="blur" style="left:161px;top:478px;width:57px;height:24px;background-color:#e3e3e3;border-radius:9px"></div><div class="blur" style="left:161px;top:527px;width:55px;height:23px;background-color:#d8d8d8;border-radius:9px"></div><div class="blur" style="left:161px;top:574px;width:64px;height:12px;background-color:#e3e3e3;border-radius:3px"></div>
<div class="vl" style="left:53px"></div><div class="vl" style="left:113px"></div><div class="vl" style="left:293px"></div><div class="vl" style="left:473px"></div><div class="vl" style="left:653px"></div><div class="vl" style="left:833px"></div><div class="vl" style="left:1013px"></div>
<div class="cb" style="left:20px;top:25px"></div><div class="c" style="left:53px;width:59px;top:11px;line-height:23px">序<br>号</div><div class="c" style="left:113px;width:179px;top:25px">名称</div><div class="c" style="left:293px;width:179px;top:25px">开始营业时间</div><div class="c" style="left:473px;width:179px;top:25px">结束营业时间</div><div class="c" style="left:653px;width:179px;top:25px">联系人手机号</div><div class="c" style="left:833px;width:179px;top:25px">免停时长</div><div class="c" style="left:1013px;width:179px;top:25px">月租车过期免停时间</div>
<div id="fix">
<div class="hd" style="width:401px"></div><div class="c" style="left:0;width:400px;top:25px">操作</div>
<div class="row" style="top:70.050px;height:49.375px;width:401px;"><div class="sb" style="left:20px;width:72px;top:12.35px">收费规则</div><div class="sb" style="left:104px;width:72px;top:12.35px">收款账号</div><div class="sb" style="left:188px;width:62.5px;top:12.35px">关卡(4)</div><div class="sb" style="left:263px;width:51px;top:12.35px">编 辑</div><div class="sb red" style="left:326px;width:52px;top:12.35px">删 除</div></div>
<div class="row" style="top:119.425px;height:49.375px;width:401px;"><div class="sb" style="left:20px;width:72px;top:12.35px">收费规则</div><div class="sb" style="left:104px;width:72px;top:12.35px">收款账号</div><div class="sb" style="left:188px;width:62.5px;top:12.35px">关卡(3)</div><div class="sb" style="left:263px;width:51px;top:12.35px">编 辑</div><div class="sb red" style="left:326px;width:52px;top:12.35px">删 除</div></div>
<div class="row" style="top:168.800px;height:49.375px;width:401px;"><div class="sb" style="left:20px;width:72px;top:12.35px">收费规则</div><div class="sb" style="left:104px;width:72px;top:12.35px">收款账号</div><div class="sb" style="left:188px;width:62.5px;top:12.35px">关卡(4)</div><div class="sb" style="left:263px;width:51px;top:12.35px">编 辑</div><div class="sb red" style="left:326px;width:52px;top:12.35px">删 除</div></div>
<div class="row" style="top:218.175px;height:49.375px;width:401px;"><div class="sb" style="left:20px;width:72px;top:12.35px">收费规则</div><div class="sb" style="left:104px;width:72px;top:12.35px">收款账号</div><div class="sb" style="left:188px;width:62.5px;top:12.35px">关卡(8)</div><div class="sb" style="left:263px;width:51px;top:12.35px">编 辑</div><div class="sb red" style="left:326px;width:52px;top:12.35px">删 除</div></div>
<div class="row" style="top:267.550px;height:49.375px;width:401px;"><div class="sb" style="left:20px;width:72px;top:12.35px">收费规则</div><div class="sb" style="left:104px;width:72px;top:12.35px">收款账号</div><div class="sb" style="left:188px;width:62.5px;top:12.35px">关卡(4)</div><div class="sb" style="left:263px;width:51px;top:12.35px">编 辑</div><div class="sb red" style="left:326px;width:52px;top:12.35px">删 除</div></div>
<div class="row" style="top:316.925px;height:49.375px;width:401px;"><div class="sb" style="left:20px;width:72px;top:12.35px">收费规则</div><div class="sb" style="left:104px;width:72px;top:12.35px">收款账号</div><div class="sb" style="left:188px;width:62.5px;top:12.35px">关卡(2)</div><div class="sb" style="left:263px;width:51px;top:12.35px">编 辑</div><div class="sb red" style="left:326px;width:52px;top:12.35px">删 除</div></div>
<div class="row" style="top:366.300px;height:49.375px;width:401px;"><div class="sb" style="left:20px;width:72px;top:12.35px">收费规则</div><div class="sb" style="left:104px;width:72px;top:12.35px">收款账号</div><div class="sb" style="left:188px;width:62.5px;top:12.35px">关卡(4)</div><div class="sb" style="left:263px;width:51px;top:12.35px">编 辑</div><div class="sb red" style="left:326px;width:52px;top:12.35px">删 除</div></div>
<div class="row" style="top:415.675px;height:49.375px;width:401px;"><div class="sb" style="left:20px;width:72px;top:12.35px">收费规则</div><div class="sb" style="left:104px;width:72px;top:12.35px">收款账号</div><div class="sb" style="left:188px;width:62.5px;top:12.35px">关卡(3)</div><div class="sb" style="left:263px;width:51px;top:12.35px">编 辑</div><div class="sb red" style="left:326px;width:52px;top:12.35px">删 除</div></div>
<div class="row" style="top:465.050px;height:49.375px;width:401px;"><div class="sb" style="left:20px;width:72px;top:12.35px">收费规则</div><div class="sb" style="left:104px;width:72px;top:12.35px">收款账号</div><div class="sb" style="left:188px;width:62.5px;top:12.35px">关卡(5)</div><div class="sb" style="left:263px;width:51px;top:12.35px">编 辑</div><div class="sb red" style="left:326px;width:52px;top:12.35px">删 除</div></div>
<div class="row" style="top:514.425px;height:49.375px;width:401px;background:#f5f7fa;"><div class="sb" style="left:20px;width:72px;top:12.35px">收费规则</div><div class="sb" style="left:104px;width:72px;top:12.35px">收款账号</div><div class="sb" style="left:188px;width:62.5px;top:12.35px">关卡(6)</div><div class="sb" style="left:263px;width:51px;top:12.35px">编 辑</div><div class="sb red" style="left:326px;width:52px;top:12.35px">删 除</div></div>
<div class="row" style="top:563.800px;height:49.375px;width:401px;"><div class="sb" style="left:20px;width:72px;top:12.35px">收费规则</div><div class="sb" style="left:104px;width:72px;top:12.35px">收款账号</div><div class="sb" style="left:188px;width:62.5px;top:12.35px">关卡(2)</div><div class="sb" style="left:263px;width:51px;top:12.35px">编 辑</div><div class="sb red" style="left:326px;width:52px;top:12.35px">删 除</div></div>
<div class="abs" style="left:392px;top:72px;width:6px;height:263px;background:#f4f4f5;border-radius:3px"></div>
</div>
<div class="abs" style="left:0;top:565px;width:1056px;height:20px;background:rgba(236,236,236,.45)"></div>
</div>
<div class="t" style="left:758.4px;top:825px;font-size:14px;color:#606266;">共 102 条</div>
<div class="abs" style="left:834px;top:818px;width:128px;height:32px;border:1px solid #dcdfe6;border-radius:3px;background:#fff"></div><div class="t" style="left:862.5px;top:826px;font-size:14px;color:#606266;">20条/页</div><svg class="abs" style="left:937.6px;top:829.8px;width:12px;height:8px;color:#a8abb2" viewBox="0 0 12 8"><path d="M1.2 1.2 L6 6.6 L10.8 1.2" fill="none" stroke="currentColor" stroke-width="1.05" /></svg>
<div class="pg" style="left:978px"></div><svg class="abs" style="left:990px;top:828.3px;width:8px;height:12px;color:#c0c4cc" viewBox="0 0 8 12"><path d="M6 1.5 L2 6 L6 10.5" fill="none" stroke="currentColor" stroke-width="1.1" /></svg>
<div class="pg on" style="left:1018px">1</div><div class="pg" style="left:1058px">2</div><div class="pg" style="left:1098px">3</div><div class="pg" style="left:1138px">4</div><div class="pg" style="left:1178px">5</div><div class="pg" style="left:1218px">6</div>
<div class="pg" style="left:1258px"></div><svg class="abs" style="left:1270.5px;top:828.3px;width:8px;height:12px;color:#606266" viewBox="0 0 8 12"><path d="M2 1.5 L6 6 L2 10.5" fill="none" stroke="currentColor" stroke-width="1.1" /></svg>
<div class="t" style="left:1305.6px;top:825px;font-size:14px;color:#606266;">前往</div>
<div class="abs" style="left:1342px;top:818px;width:56px;height:32px;border:1px solid #dcdfe6;border-radius:3px;background:#fff;text-align:center;font-size:13px;line-height:30px;color:#606266">1</div>
<div class="t" style="left:1406px;top:825px;font-size:14px;color:#606266;">页</div>
<div class="abs" style="left:286px;top:872px;width:1606px;height:0;border-top:1px dashed #dcdfe6"></div>
<div class="t" style="left:986.3px;top:891px;font-size:14px;color:#909399;">Copyright</div><svg class="abs" style="left:1052px;top:893px;width:15px;height:15px;color:#909399" viewBox="0 0 15 15"><circle cx="7.4" cy="7" r="6.3" fill="none" stroke="currentColor" stroke-width="1"/><path d="M10.2 5.2 A3.4 3.4 0 1 0 10.2 8.8" fill="none" stroke="currentColor" stroke-width="1.1"/></svg><div class="t" style="left:1072.6px;top:891px;font-size:14px;color:#909399;">2022</div><div class="t" style="left:1107.3px;top:891px;font-size:14px;color:#909399;">智慧管理系统</div>
</body>
</html>
